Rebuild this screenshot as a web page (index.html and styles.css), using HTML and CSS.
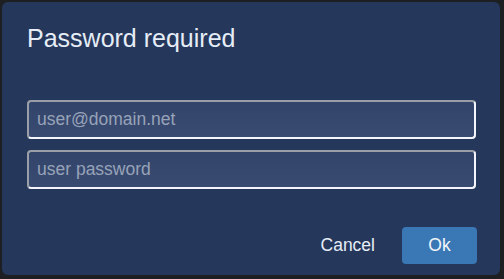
FILE: index.html
```html
<!DOCTYPE html>
<html>
<head>
    <meta name="viewport" content="width=device-width, initial-scale=1.0">
    <title>Password required</title>
    <link rel="stylesheet" href="styles.css">
</head>
<body>
    <!-- Login Dialog -->
    <div class="dialog">
        <h2 class="dialog-title">Password required</h2>
        <div class="fields">
            <input type="text" class="field" placeholder="user@domain.net">
            <input type="password" class="field" placeholder="user password">
        </div>
        <div class="actions">
            <button class="btn btn-flat">Cancel</button>
            <button class="btn btn-primary">Ok</button>
        </div>
    </div>
</body>
</html>
```

FILE: styles.css
```css
body {
    margin: 0;
    font-family: "Liberation Sans", Arial, sans-serif;
    background-color: #1d1f22;
}

.dialog {
    margin: 2px 4px 4px 2px;
    height: 273px;
    box-sizing: border-box;
    padding: 21px 24px 11px 25px;
    background-color: #25375a;
    border-radius: 6px;
    display: flex;
    flex-direction: column;
}

.dialog-title {
    margin: 0;
    font-size: 25px;
    font-weight: normal;
    line-height: 30px;
    color: #e6edf7;
}

.fields {
    display: flex;
    flex-direction: column;
    gap: 11px;
    margin-top: 47px;
}

.field {
    height: 39px;
    box-sizing: border-box;
    padding: 0 8px;
    font-family: inherit;
    font-size: 17.5px;
    color: #e6edf7;
    background: linear-gradient(#33446b, #3a4b71);
    border: 2px solid #f4f6fb;
    border-top-color: #9a9ea6;
    border-left-color: #9a9ea6;
    border-radius: 4px;
    outline: none;
}

.field::placeholder {
    color: #97a3b8;
}

.actions {
    margin-top: auto;
    display: flex;
    justify-content: flex-end;
    gap: 27px;
}

.btn {
    height: 37px;
    font-family: inherit;
    font-size: 17.5px;
    border: none;
    border-radius: 4px;
    cursor: pointer;
}

.btn-flat {
    background: none;
    color: #e6edf7;
    padding: 0;
}

.btn-primary {
    width: 75px;
    background-color: #3a77b5;
    color: #f2f6fb;
    margin-right: -1px;
}
```
